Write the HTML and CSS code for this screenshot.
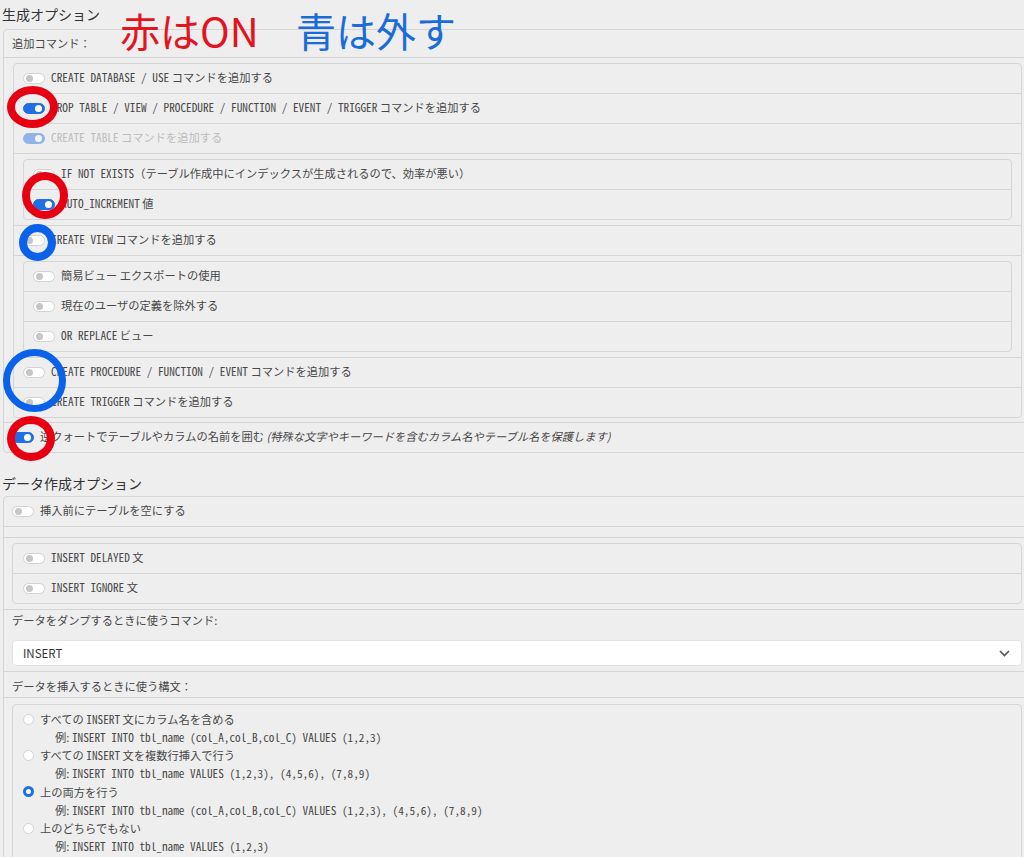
FILE: index.html
```html
<!DOCTYPE html>
<html lang="ja">
<head>
    <meta charset="UTF-8">
    <meta name="viewport" content="width=device-width, initial-scale=1.0">
    <title>エクスポート - 生成オプション</title>
    <link rel="stylesheet" href="styles.css">
</head>
<body>
<div class="page">
    <h2 class="section-title">生成オプション</h2>
    <div class="group">
        <div class="group-head">追加コマンド：</div>
        <div class="group-body">
            <ul class="list">
                <li class="item"><span class="switch"></span><span class="label"><code>CREATE DATABASE / USE</code> コマンドを追加する</span></li>
                <li class="item"><span class="switch on"></span><span class="label"><code>DROP TABLE / VIEW / PROCEDURE / FUNCTION / EVENT / TRIGGER</code> コマンドを追加する</span></li>
                <li class="item disabled"><span class="switch on"></span><span class="label"><code>CREATE TABLE</code> コマンドを追加する</span></li>
                <li class="item nest">
                    <ul class="list">
                        <li class="item"><span class="switch"></span><span class="label"><code>IF NOT EXISTS</code>（テーブル作成中にインデックスが生成されるので、効率が悪い）</span></li>
                        <li class="item"><span class="switch on"></span><span class="label"><code>AUTO_INCREMENT</code> 値</span></li>
                    </ul>
                </li>
                <li class="item"><span class="switch"></span><span class="label"><code>CREATE VIEW</code> コマンドを追加する</span></li>
                <li class="item nest">
                    <ul class="list">
                        <li class="item"><span class="switch"></span><span class="label">簡易ビュー エクスポートの使用</span></li>
                        <li class="item"><span class="switch"></span><span class="label">現在のユーザの定義を除外する</span></li>
                        <li class="item"><span class="switch"></span><span class="label"><code>OR REPLACE</code> ビュー</span></li>
                    </ul>
                </li>
                <li class="item"><span class="switch"></span><span class="label"><code>CREATE PROCEDURE / FUNCTION / EVENT</code> コマンドを追加する</span></li>
                <li class="item"><span class="switch"></span><span class="label"><code>CREATE TRIGGER</code> コマンドを追加する</span></li>
            </ul>
        </div>
        <div class="item outer"><span class="switch on"></span><span class="label">逆クォートでテーブルやカラムの名前を囲む <em>(特殊な文字やキーワードを含むカラム名やテーブル名を保護します)</em></span></div>
    </div>

    <h2 class="section-title second">データ作成オプション</h2>
    <div class="group">
        <div class="item outer"><span class="switch"></span><span class="label">挿入前にテーブルを空にする</span></div>
        <div class="spacer"></div>
        <div class="item nest outer">
            <ul class="list">
                <li class="item"><span class="switch"></span><span class="label"><code>INSERT DELAYED</code> 文</span></li>
                <li class="item"><span class="switch"></span><span class="label"><code>INSERT IGNORE</code> 文</span></li>
            </ul>
        </div>
        <div class="field">
            <div class="field-label">データをダンプするときに使うコマンド:</div>
            <div class="select">
                <span>INSERT</span>
                <svg width="11" height="7" viewBox="0 0 11 7"><path d="M1 1l4.5 4.5L10 1" fill="none" stroke="#555" stroke-width="1.6"/></svg>
            </div>
        </div>
        <div class="field-label boxed">データを挿入するときに使う構文：</div>
        <div class="field choices-wrap">
            <ul class="choices">
                <li>
                    <div class="choice-line"><span class="radio"></span><span>すべての <code>INSERT</code> 文にカラム名を含める</span></div>
                    <div class="example">例: <code>INSERT INTO tbl_name (col_A,col_B,col_C) VALUES (1,2,3)</code></div>
                </li>
                <li>
                    <div class="choice-line"><span class="radio"></span><span>すべての <code>INSERT</code> 文を複数行挿入で行う</span></div>
                    <div class="example">例: <code>INSERT INTO tbl_name VALUES (1,2,3), (4,5,6), (7,8,9)</code></div>
                </li>
                <li>
                    <div class="choice-line"><span class="radio checked"></span><span>上の両方を行う</span></div>
                    <div class="example">例: <code>INSERT INTO tbl_name (col_A,col_B,col_C) VALUES (1,2,3), (4,5,6), (7,8,9)</code></div>
                </li>
                <li>
                    <div class="choice-line"><span class="radio"></span><span>上のどちらでもない</span></div>
                    <div class="example">例: <code>INSERT INTO tbl_name VALUES (1,2,3)</code></div>
                </li>
            </ul>
        </div>
    </div>

    <!-- hand-drawn notes on top of the screenshot -->
    <div class="note red">赤はON</div>
    <div class="note blue">青は外す</div>
    <div class="ring red ring-1"></div>
    <div class="ring red ring-2"></div>
    <div class="ring blue ring-3"></div>
    <div class="ring blue ring-4"></div>
    <div class="ring red ring-5"></div>
</div>
</body>
</html>
```

FILE: styles.css
```css
html, body {
    overflow: hidden;
}
body {
    margin: 0;
    background-color: #eeeeee;
    color: #484848;
    font-family: "Noto Sans CJK JP", "Noto Sans", sans-serif;
    font-size: 11.25px;
}
.page {
    position: relative;
    width: 1032px;
}
code {
    font-family: "Noto Sans Mono CJK JP", "Liberation Mono", monospace;
    font-size: 11.25px;
}
.section-title {
    margin: 0;
    padding: 6px 2px 7px;
    font-size: 14px;
    line-height: 16px;
    font-weight: 400;
    color: #333;
}
.section-title.second {
    padding: 21px 2px 4px;
    line-height: 18px;
}
.group {
    margin-left: 3px;
    border: 1px solid #d5d5d5;
    border-radius: 4px;
}
.group-head {
    height: 27px;
    line-height: 27px;
    padding-left: 8px;
    border-bottom: 1px solid #d5d5d5;
}
.group-body {
    padding: 5px 9px 4px;
}
.list {
    list-style: none;
    margin: 0;
    padding: 0;
    border: 1px solid #d5d5d5;
    border-radius: 4px;
}
.item {
    display: flex;
    align-items: center;
    gap: 6px;
    height: 29px;
    padding: 0 9px;
    border-bottom: 1px solid #d5d5d5;
    white-space: nowrap;
}
.label {
    padding-bottom: 4px;
}
.list > .item:last-child {
    border-bottom: none;
}
.item.nest {
    display: block;
    height: auto;
    padding: 5px 9px;
}
.item.outer {
    padding: 0 8px;
}
.item.nest.outer {
    padding: 5px 9px 5px 8px;
}
.group > .item.outer:last-child {
    border-bottom: none;
}
.group-body + .item {
    border-top: 1px solid #d5d5d5;
}
.nest.outer .item {
    padding: 0 10px;
}
.item.disabled {
    color: #bdbdbd;
}
.item.disabled .switch {
    opacity: 0.45;
}
.label em {
    font-style: italic;
}
.spacer {
    height: 10px;
    border-bottom: 1px solid #d5d5d5;
}

/* toggle switch */
.switch {
    flex: none;
    position: relative;
    width: 22px;
    height: 11px;
    box-sizing: border-box;
    border: 1px solid #d2d2d2;
    border-radius: 6px;
    background-color: #fff;
}
.switch::after {
    content: "";
    position: absolute;
    top: 1px;
    left: 2px;
    width: 7px;
    height: 7px;
    border-radius: 50%;
    background-color: #c6c6c6;
}
.switch.on {
    background-color: #1f6fe5;
    border-color: #1f6fe5;
}
.switch.on::after {
    left: auto;
    right: 2px;
    background-color: #fff;
}

/* fields */
.field {
    padding: 1px 9px 5px 8px;
    border-bottom: 1px solid #d5d5d5;
}
.field-label {
    line-height: 18px;
}
.field-label.boxed {
    padding: 5px 8px 2px;
    border-bottom: 1px solid #d5d5d5;
}
.select {
    display: flex;
    align-items: center;
    justify-content: space-between;
    margin-top: 11px;
    height: 26px;
    box-sizing: border-box;
    padding: 0 11px 0 10px;
    background-color: #fff;
    border: 1px solid #e2e2e2;
    border-radius: 4px;
    font-size: 11.5px;
    color: #333;
}
.choices-wrap {
    padding-top: 6px;
    border-bottom: none;
}
.choices {
    list-style: none;
    margin: 0;
    padding: 5px 10px;
    border: 1px solid #d5d5d5;
    border-radius: 4px;
}
.choice-line {
    display: flex;
    align-items: center;
    gap: 6px;
    line-height: 18.15px;
}
.example {
    padding-left: 32px;
    line-height: 18.15px;
}
.radio {
    flex: none;
    width: 11px;
    height: 11px;
    box-sizing: border-box;
    border: 1px solid #d4d4d4;
    border-radius: 50%;
    background-color: #fff;
}
.radio.checked {
    border: 3.5px solid #1f6fe5;
}

/* annotations */
.note {
    position: absolute;
    top: 10px;
    font-size: 40px;
    line-height: 40px;
    font-weight: 400;
}
.note.red {
    left: 120px;
    color: #e3141e;
}
.note.blue {
    left: 296px;
    color: #1a6cd8;
}
.ring {
    position: absolute;
    box-sizing: border-box;
    border-radius: 50%;
    border: 8px solid #e60012;
}
.ring.blue {
    border-color: #0a62ea;
}
.ring-1 { left: 7px; top: 86px; width: 51px; height: 42px; }
.ring-2 { left: 22px; top: 172px; width: 46px; height: 47px; }
.ring-3 { left: 19px; top: 224px; width: 37px; height: 37px; }
.ring-4 { left: 3px; top: 349px; width: 63px; height: 63px; border-width: 7px; }
.ring-5 { left: 7px; top: 416px; width: 48px; height: 45px; }
```
